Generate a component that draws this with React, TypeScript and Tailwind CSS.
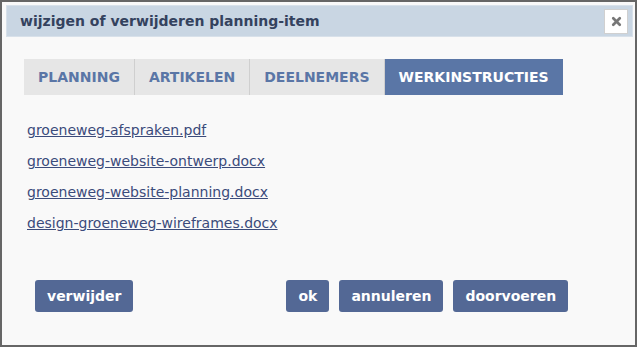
import { X } from 'lucide-react';

const tabs = ['Planning', 'Artikelen', 'Deelnemers', 'Werkinstructies'];
const files = [
  'groeneweg-afspraken.pdf',
  'groeneweg-website-ontwerp.docx',
  'groeneweg-website-planning.docx',
  'design-groeneweg-wireframes.docx',
];

export default function App() {
  const btn = "h-[32px] px-[12px] rounded-[3px] bg-[#536895] text-white font-bold text-[14px] leading-none";

  return (
    <div className="w-[637px] h-[347px] border-2 border-[#666] bg-[#f9f9f9] pt-[3px] pl-[4px] pr-[2px] font-['DejaVu_Sans',Verdana,sans-serif]">
      {/* header */}
      <div className="h-[32px] bg-[#c9d6e3] border border-[#d8e1ea] flex items-center justify-between pl-[13px] pr-[4px]">
        <h1 className="text-[14px] font-bold text-[#34425e]">wijzigen of verwijderen planning-item</h1>
        <button className="w-[24px] h-[25px] bg-white border border-[#d0d0d0] flex items-center justify-center">
          <X className="w-[13px] h-[13px] text-[#777]" strokeWidth={5} />
        </button>
      </div>

      {/* tabs */}
      <div className="flex mt-[22px] ml-[18px]">
        {tabs.map((t, i) => (
          <div key={t}
            className={`h-[36px] flex items-center px-[14px] text-[14px] font-bold uppercase ${
              i === 3 ? 'bg-[#5a76a6] text-white' : 'bg-[#e6e6e6] text-[#5a76a6] border-r border-[#cfcfcf]'
            }`}>
            {t}
          </div>
        ))}
      </div>

      {/* files */}
      <div className="mt-[26px] ml-[21px] flex flex-col gap-[12px]">
        {files.map((f) => (
          <a key={f} href="#" className="text-[14px] leading-[19px] text-[#3b4b7b] underline w-fit">{f}</a>
        ))}
      </div>

      {/* buttons */}
      <div className="flex mt-[47px] ml-[29px]">
        <button className={btn}>verwijder</button>
        <div className="flex gap-[10px] ml-[153px]">
          <button className={btn}>ok</button>
          <button className={btn}>annuleren</button>
          <button className={btn}>doorvoeren</button>
        </div>
      </div>
    </div>
  );
}
